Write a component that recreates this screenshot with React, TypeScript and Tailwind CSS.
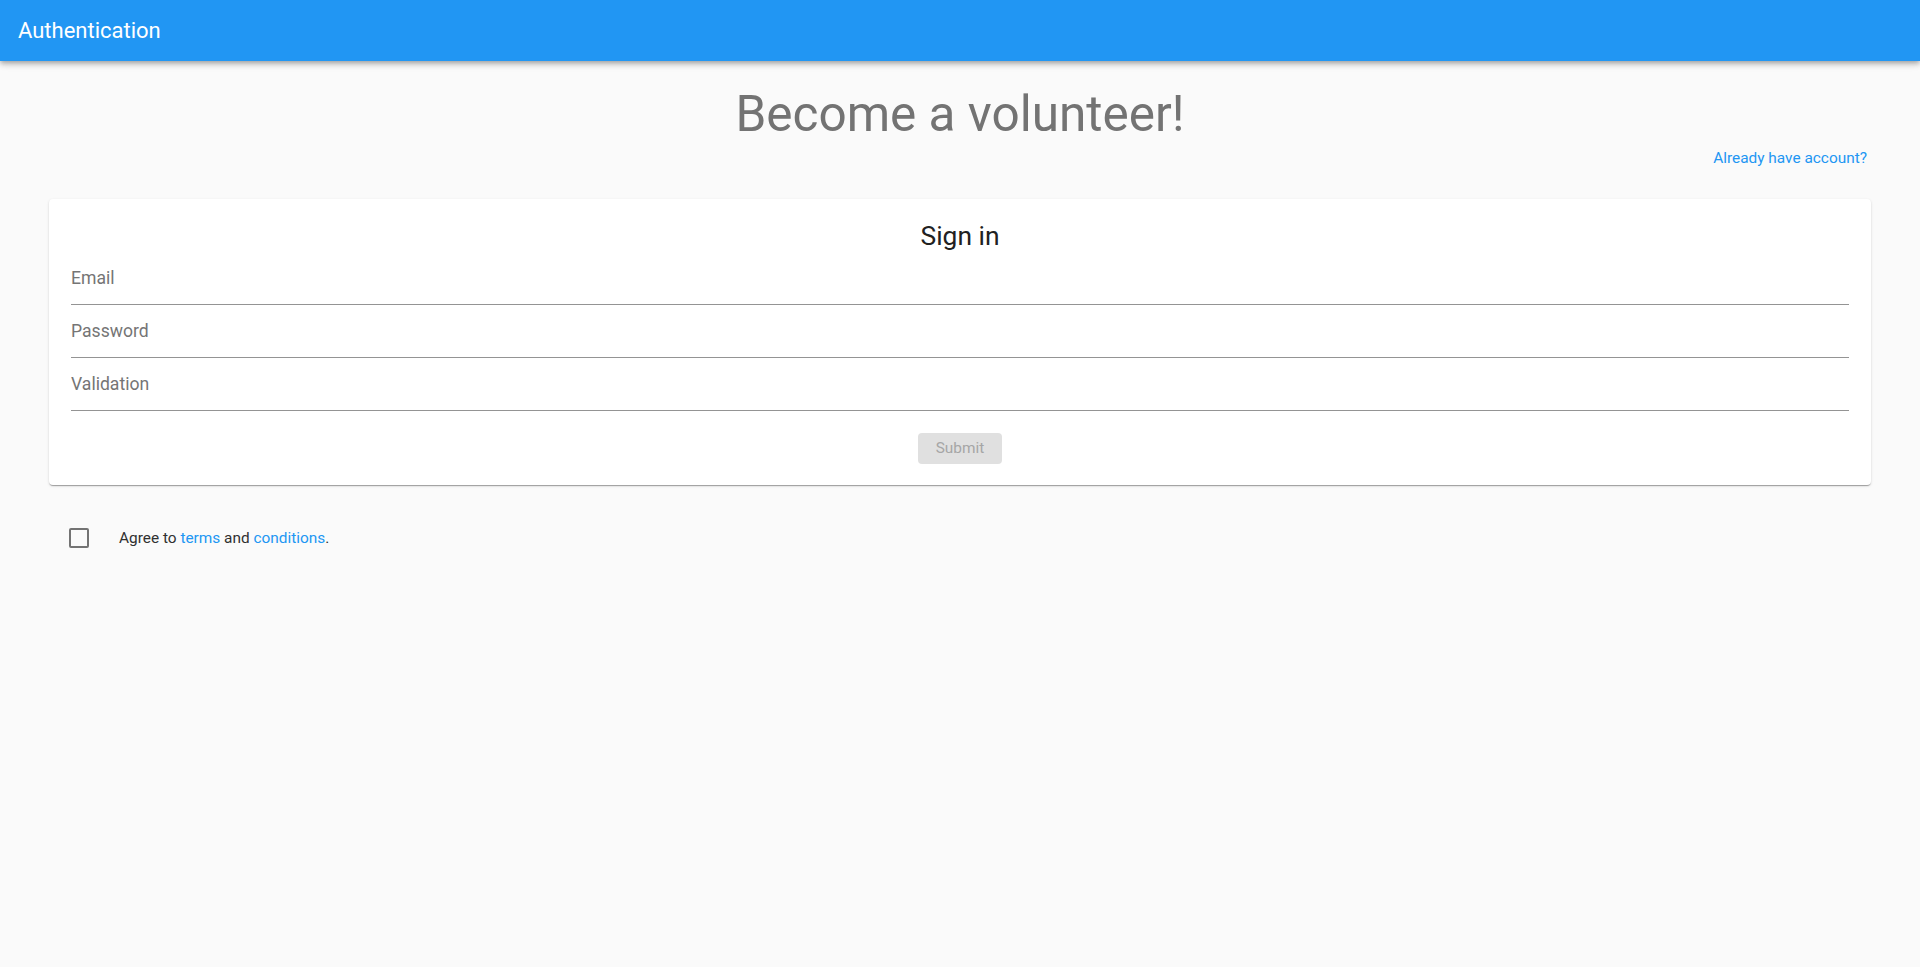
import { useState } from 'react';

const FONT = "font-['Roboto','Liberation_Sans',sans-serif]";

function Field({ label, type = 'text' }: { label: string; type?: string }) {
  return (
    <div className="h-[53px] border-b border-[#949494] pt-[14px]">
      <input
        type={type}
        placeholder={label}
        className="w-full bg-transparent text-[17.6px] leading-[24px] text-[#212121] placeholder:text-[#757575] outline-none"
      />
    </div>
  );
}

export default function App() {
  const [agreed, setAgreed] = useState(false);

  return (
    <div className={`${FONT} min-h-[967px] bg-[#fafafa]`}>
      <header className="h-[61px] flex items-center px-[18px] bg-[#2196f3] text-white shadow-[0_2px_4px_-1px_rgba(0,0,0,0.2),0_4px_5px_0_rgba(0,0,0,0.14),0_1px_10px_0_rgba(0,0,0,0.12)] relative z-10">
        <span className="text-[22px] font-normal">Authentication</span>
      </header>

      <main className="px-[49px]">
        <h1 className="mt-[24px] text-center text-[49.5px] leading-[58px] font-normal text-[#737373]">
          Become a volunteer!
        </h1>

        <div className="mt-[5px] flex justify-end pr-[4px]">
          <a href="#" className="text-[15.4px] leading-[20px] text-[#2196f3]">
            Already have account?
          </a>
        </div>

        <form
          className="mt-[31px] bg-white rounded-[4px] px-[22px] pt-[23px] pb-[21px] shadow-[0_2px_1px_-1px_rgba(0,0,0,0.2),0_1px_1px_0_rgba(0,0,0,0.14),0_1px_3px_0_rgba(0,0,0,0.12)]"
          onSubmit={(e) => e.preventDefault()}
        >
          <h2 className="text-center text-[26.4px] leading-[28px] font-normal text-[#212121]">Sign in</h2>
          <div className="mt-[2px]">
            <Field label="Email" type="email" />
            <Field label="Password" type="password" />
            <Field label="Validation" type="password" />
          </div>
          <div className="mt-[22px] flex justify-center">
            <button
              type="submit"
              disabled
              className="w-[84px] h-[31px] rounded-[4px] bg-[#e0e0e0] text-[15.4px] text-[#a6a6a6]"
            >
              Submit
            </button>
          </div>
        </form>

        <div className="mt-[33px] h-[40px] flex items-center pl-[20px]">
          <button
            type="button"
            aria-label="Agree"
            onClick={() => setAgreed(!agreed)}
            className="w-[20px] h-[20px] border-2 border-[#737373] rounded-[2px] shrink-0"
          />
          <span className="ml-[30px] pt-[2px] text-[15.4px] text-[#303030]">
            Agree to <a href="#" className="text-[#2196f3]">terms</a> and{' '}
            <a href="#" className="text-[#2196f3]">conditions</a>.
          </span>
        </div>
      </main>
    </div>
  );
}
